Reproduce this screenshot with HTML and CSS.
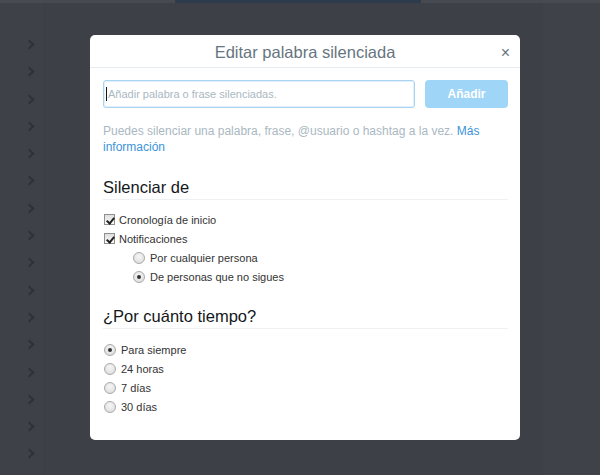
FILE: index.html
```html
<!DOCTYPE html>
<html lang="es">
<head>
<meta charset="utf-8">
<title>Editar palabra silenciada</title>
<link rel="stylesheet" href="styles.css">
</head>
<body>
<div class="page">
  <div class="topstrip"><div class="topbar"></div></div>
  <div class="backdrop">
    <aside class="rail">
      <span class="chev"></span><span class="chev"></span><span class="chev"></span><span class="chev"></span>
      <span class="chev"></span><span class="chev"></span><span class="chev"></span><span class="chev"></span>
      <span class="chev"></span><span class="chev"></span><span class="chev"></span><span class="chev"></span>
      <span class="chev"></span><span class="chev"></span><span class="chev"></span><span class="chev"></span>
    </aside>
    <main class="center"></main>
    <aside class="side"></aside>
  </div>

  <div class="modal">
    <header class="modal-head">
      <h1 class="modal-title">Editar palabra silenciada</h1>
      <span class="close">×</span>
    </header>
    <div class="modal-body">
      <div class="add-row">
        <div class="field"><span class="caret"></span><span class="placeholder">Añadir palabra o frase silenciadas.</span></div>
        <button class="add-btn">Añadir</button>
      </div>
      <p class="help">Puedes silenciar una palabra, frase, @usuario o hashtag a la vez. <a class="link">Más información</a></p>

      <h2 class="section">Silenciar de</h2>
      <ul class="opts">
        <li class="opt"><span class="cb on"></span>Cronología de inicio</li>
        <li class="opt"><span class="cb on"></span>Notificaciones</li>
        <li class="opt sub"><span class="rb"></span>Por cualquier persona</li>
        <li class="opt sub"><span class="rb on"></span>De personas que no sigues</li>
      </ul>

      <h2 class="section second">¿Por cuánto tiempo?</h2>
      <ul class="opts dur">
        <li class="opt"><span class="rb on"></span>Para siempre</li>
        <li class="opt"><span class="rb"></span>24 horas</li>
        <li class="opt"><span class="rb"></span>7 días</li>
        <li class="opt"><span class="rb"></span>30 días</li>
      </ul>
    </div>
  </div>
</div>
</body>
</html>
```

FILE: styles.css
```css
* { box-sizing: border-box; }
html, body { margin: 0; padding: 0; }
body {
  width: 600px;
  height: 475px;
  overflow: hidden;
  background: #3d4147;
  font-family: "Liberation Sans", Arial, sans-serif;
}
.page {
  position: relative;
  width: 600px;
  height: 475px;
  display: flex;
  flex-direction: column;
}
.topstrip {
  height: 3px;
  background: #474b51;
  display: flex;
  padding-left: 175px;
}
.topbar {
  width: 246px;
  height: 3px;
  background: #2c3c4d;
}
.backdrop {
  flex: 1;
  display: flex;
}
.rail {
  width: 45px;
  background: #3e4248;
  border-right: 1px solid #3a3e44;
  display: flex;
  flex-direction: column;
  align-items: center;
  padding-top: 38px;
  padding-left: 14px;
  gap: 17.3px;
}
.chev {
  width: 7px;
  height: 7px;
  border-top: 2px solid #2e3136;
  border-right: 2px solid #2e3136;
  transform: rotate(45deg);
  margin-bottom: 3px;
}
.center {
  flex: 1;
  background: #3d4147;
}
.side {
  width: 57px;
  background: #3f4349;
}

.modal {
  position: absolute;
  left: 90px;
  top: 35px;
  width: 430px;
  height: 405px;
  background: #fff;
  border-radius: 5px;
  display: flex;
  flex-direction: column;
}
.modal-head {
  height: 33px;
  border-bottom: 1px solid #e6ecf0;
  display: flex;
  align-items: center;
  justify-content: center;
  position: relative;
}
.modal-title {
  margin: 0;
  font-size: 16.5px;
  font-weight: normal;
  color: #66757f;
  line-height: 22px;
  padding-top: 1px;
}
.close {
  position: absolute;
  right: 10px;
  top: 9px;
  font-size: 16px;
  line-height: 18px;
  color: #66757f;
}
.modal-body {
  padding: 12px 12px 0 13px;
}
.add-row {
  display: flex;
  gap: 10px;
}
.field {
  width: 312px;
  height: 28px;
  border: 1px solid #a8d3f1;
  border-radius: 3px;
  display: flex;
  align-items: center;
  padding-left: 2px;
  box-shadow: inset 0 0 0 1px #e2f1fb;
}
.caret {
  width: 1px;
  height: 14px;
  background: #14171a;
  margin-right: 1px;
}
.placeholder {
  font-size: 11px;
  color: #aab8c2;
}
.add-btn {
  width: 83px;
  height: 28px;
  border: none;
  border-radius: 4px;
  background: #9fd5f7;
  color: #fff;
  font-family: "Liberation Sans", Arial, sans-serif;
  font-weight: bold;
  font-size: 12px;
  padding: 0;
}
.help {
  margin: 15px 0 0;
  font-size: 12px;
  line-height: 16px;
  color: #aab8c2;
}
.link {
  color: #3b94d9;
}
.section {
  margin: 21px 0 0;
  font-size: 16.5px;
  font-weight: normal;
  line-height: 22px;
  color: #14171a;
  padding-bottom: 1px;
  border-bottom: 1px solid #eef1f4;
}
.section.second {
  margin-top: 19px;
}
.opts {
  list-style: none;
  margin: 10px 0 0;
  padding: 0;
}
.opts.dur {
  margin-top: 11px;
}
.opt {
  height: 19px;
  display: flex;
  align-items: center;
  font-size: 11px;
  color: #333;
}
.opt.sub {
  padding-left: 29px;
}
.cb {
  width: 11px;
  height: 11px;
  border: 1px solid #8e8f8f;
  background: linear-gradient(#dedede, #fbfbfb);
  margin: 0 4px 0 1px;
  position: relative;
  flex: none;
}
.cb.on::after {
  content: "";
  position: absolute;
  left: 2.5px;
  top: 0.5px;
  width: 3px;
  height: 6px;
  border-right: 2px solid #222;
  border-bottom: 2px solid #222;
  transform: rotate(40deg);
}
.rb {
  width: 12px;
  height: 12px;
  border-radius: 50%;
  border: 1px solid #a9a9a9;
  background: radial-gradient(circle at 50% 35%, #f6f6f6, #d9d9d9);
  margin: 0 5px 0 1px;
  position: relative;
  flex: none;
}
.rb.on::after {
  content: "";
  position: absolute;
  left: 3px;
  top: 3px;
  width: 4px;
  height: 4px;
  border-radius: 50%;
  background: #333;
}
```
